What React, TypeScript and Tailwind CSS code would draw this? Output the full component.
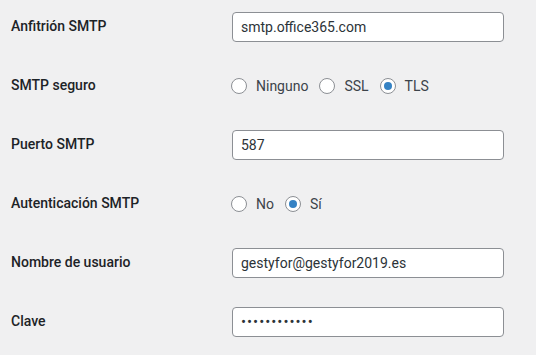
import React from 'react';

const font = { fontFamily: '"Segoe UI", Roboto, "Noto Sans", sans-serif' };

const TextField = ({ value, secret }: { value: string; secret?: boolean }) => (
    <input
        type="text"
        readOnly
        defaultValue={value}
        className={`w-[272px] h-[30px] px-[8px] bg-white border border-[#8c8f94] rounded-[4px] text-[14px] text-[#2c3338] outline-none ${secret ? 'tracking-[1px] text-[15px]' : ''}`}
    />
);

const Radio = ({ label, checked }: { label: string; checked?: boolean }) => (
    <label className="flex items-center mr-[11px]">
        <span className="w-[16px] h-[16px] rounded-full border border-[#8c8f94] bg-white flex items-center justify-center mr-[9px]">
            {checked && <span className="w-[8px] h-[8px] rounded-full bg-[#3582c4]" />}
        </span>
        <span className="text-[14px] text-[#3c434a] pt-[2px]">{label}</span>
    </label>
);

const Row = ({ label, children }: { label: string; children: React.ReactNode }) => (
    <div className="flex items-center h-[59px]">
        <div className="w-[232px] pl-[11px] text-[14px] font-medium text-[#1d2327]">{label}</div>
        <div className="flex items-center">{children}</div>
    </div>
);

const App = () => {
    return (
        <div style={font} className="w-[536px] h-[355px] bg-[#f0f0f1] overflow-hidden">
            <div className="flex flex-col -mt-[3px]">
                <Row label="Anfitrión SMTP"><TextField value="smtp.office365.com" /></Row>
                <Row label="SMTP seguro">
                    <div className="flex items-center -ml-[1px]">
                        <Radio label="Ninguno" />
                        <Radio label="SSL" />
                        <Radio label="TLS" checked />
                    </div>
                </Row>
                <Row label="Puerto SMTP"><TextField value="587" /></Row>
                <Row label="Autenticación SMTP">
                    <div className="flex items-center -ml-[1px]">
                        <Radio label="No" />
                        <Radio label="Sí" checked />
                    </div>
                </Row>
                <Row label="Nombre de usuario"><TextField value="gestyfor@gestyfor2019.es" /></Row>
                <Row label="Clave"><TextField secret value="••••••••••••" /></Row>
            </div>
        </div>
    );
};

export default App;
